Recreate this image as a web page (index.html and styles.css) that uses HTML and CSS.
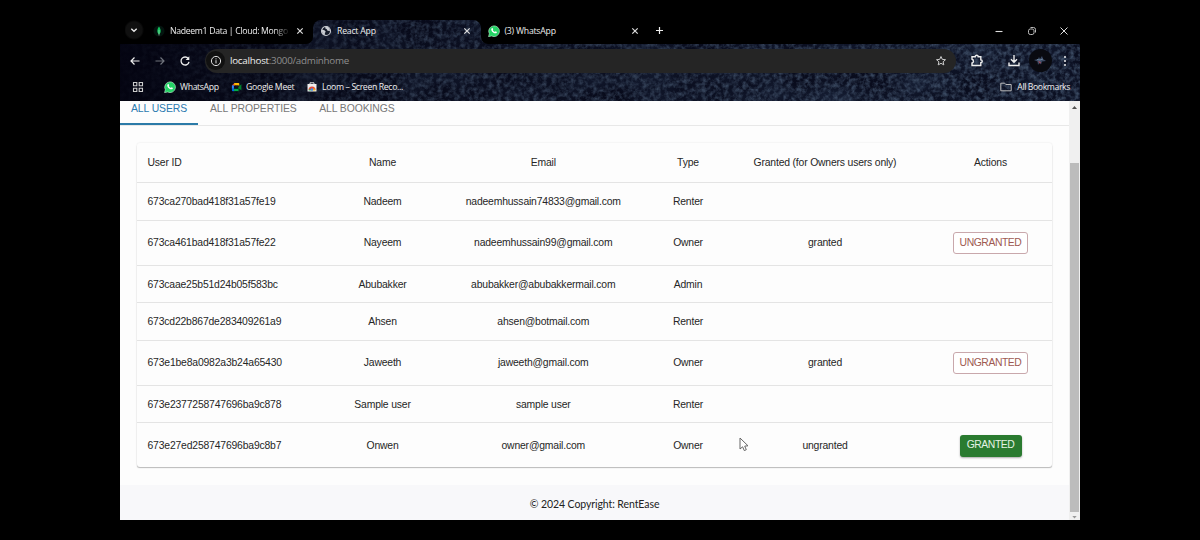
FILE: index.html
```html
<!DOCTYPE html>
<html lang="en">
<head>
<meta charset="utf-8">
<title>React App</title>
<link rel="stylesheet" href="styles.css">
</head>
<body>
<svg class="defs" width="0" height="0">
  <symbol id="close" viewBox="0 0 10 10"><path d="M2.300 2.300l5.400 5.400M7.700 2.300L2.300 7.700" stroke="#ddd" stroke-width="1.200" fill="none"/></symbol>
  <symbol id="whatsapp" viewBox="0 0 12 12"><path d="M.5 11.700l.8-3A5.400 5.400 0 1 1 3.600 11z" fill="#25d366" stroke="#dff8e6" stroke-width=".5"/><path d="M3.600 3.400c.6-.8 1.100-.5 1.600.9l-.4.8c.5 1 1.100 1.500 2.100 1.900l.7-.7c1.600.5 1.600 1 .9 1.700-1.900 1.500-6.600-2.500-4.900-4.600z" fill="#fff"/></symbol>
</svg>
<div class="window">
  <header class="chrome">
    <svg class="texture" width="960" height="81">
      <defs>
        <filter id="grain" x="0" y="0" width="100%" height="100%" color-interpolation-filters="sRGB">
          <feTurbulence type="fractalNoise" baseFrequency=".22" numOctaves="3" seed="8"/>
          <feColorMatrix values="0 0 0 0 .26  0 0 0 0 .33  0 0 0 0 .43  2.200 0 0 0 -.8"/>
        </filter>
        <filter id="clouds" x="0" y="0" width="100%" height="100%" color-interpolation-filters="sRGB">
          <feTurbulence type="fractalNoise" baseFrequency=".018 .03" numOctaves="2" seed="4"/>
          <feColorMatrix values="0 0 0 0 .12  0 0 0 0 .17  0 0 0 0 .27  1.500 0 0 0 -.5"/>
        </filter>
        <linearGradient id="shade"><stop offset="0" stop-color="#030310" stop-opacity=".95"/><stop offset=".3" stop-color="#030310" stop-opacity=".35"/><stop offset="1" stop-color="#030310" stop-opacity=".1"/></linearGradient>
      </defs>
      <rect width="960" height="81" fill="#0a0e20"/>
      <rect width="960" height="81" filter="url(#clouds)"/>
      <rect width="960" height="81" filter="url(#grain)"/>
      <rect width="960" height="81" fill="url(#shade)"/>
    </svg>
    <div class="tabstrip">
      <div class="search-tabs"><svg width="10" height="10" viewBox="0 0 10 10"><path d="M2.300 3.700L5 6.300l2.700-2.600" stroke="#eee" stroke-width="1.300" fill="none"/></svg></div>
      <div class="btab btab-first"><svg class="fav" width="12" height="12" viewBox="0 0 12 12"><circle cx="6" cy="6" r="5.500" fill="#04140f"/><path d="M6 1.500C8.500 5 8 7.800 6 9.500 4 7.800 3.500 5 6 1.500z" fill="#13c05c"/><path d="M6 5v5.500" stroke="#b8e6c8" stroke-width=".6"/></svg><span class="btitle fade">Nadeem1 Data | Cloud: Mongo</span><svg class="x" width="10" height="10"><use href="#close"/></svg></div>
      <div class="btab active"><svg class="fav" width="12" height="12" viewBox="0 0 12 12"><circle cx="6" cy="6" r="4.500" fill="#151b29" stroke="#c9ccd2" stroke-width="1.100"/><path d="M2 4.500l2.500.8 1.300 1.400-1 1.400.3 1.800C2.500 9.300 1.500 7 2 4.500zM5.500 1.600l-.4 1.600 1.700 1 .7 1.600 2.400.3C10.300 3.600 8 1.400 5.500 1.600z" fill="#c9ccd2"/></svg><span class="btitle">React App</span><svg class="x" width="10" height="10"><use href="#close"/></svg></div>
      <div class="btab"><svg class="fav" width="12" height="12"><use href="#whatsapp"/></svg><span class="btitle">(3) WhatsApp</span><svg class="x" width="10" height="10"><use href="#close"/></svg></div>
      <svg class="plus" width="24" height="24" viewBox="0 0 24 24"><path d="M11.500 7v7M8 10.500h7" stroke="#eee" stroke-width="1.200"/></svg>
      <div class="winctl">
        <svg width="10" height="10" viewBox="0 0 10 10"><path d="M1.500 5.500h7" stroke="#ddd" stroke-width="1.100"/></svg>
        <svg width="10" height="10" viewBox="0 0 10 10" fill="none" stroke="#bbb"><rect x="1.500" y="3" width="5.500" height="5.500" rx="1.800"/><path d="M3.500 1.500h3a2 2 0 0 1 2 2v3" /></svg>
        <svg width="10" height="10" viewBox="0 0 10 10"><path d="M1.500 1.500l7 7M8.500 1.500l-7 7" stroke="#ddd"/></svg>
      </div>
    </div>
    <div class="toolbar">
      <div class="nav">
        <svg width="12" height="12" viewBox="0 0 12 12" fill="none" stroke="#eee" stroke-width="1.200"><path d="M10.500 6H2M5.500 2.500L2 6l3.500 3.500"/></svg>
        <svg width="12" height="12" viewBox="0 0 12 12" fill="none" stroke="#70747d" stroke-width="1.200"><path d="M1.500 6H10M6.500 2.500L10 6 6.500 9.500"/></svg>
        <svg width="12" height="12" viewBox="0 0 12 12" fill="none" stroke="#eee" stroke-width="1.300"><path d="M9.300 3.600A4 4 0 1 0 10 6.800"/><path d="M10.300 1.300v3.700H6.600z" fill="#eee" stroke="none"/></svg>
      </div>
      <div class="omnibox">
        <span class="info"><svg width="12" height="12" viewBox="0 0 12 12" fill="none" stroke="#ddd"><circle cx="6" cy="6" r="4.600"/><path d="M6 5.200v3.200M6 3.300v1.100"/></svg></span>
        <span class="url"><b>localhost</b>:3000/adminhome</span>
        <svg class="star" width="12" height="12" viewBox="0 0 12 12"><path d="M6 1.500l1.300 2.900 3.200.3-2.400 2.100.7 3.100L6 8.300 3.200 9.900l.7-3.100-2.400-2.100 3.200-.3z" fill="none" stroke="#ccc"/></svg>
      </div>
      <div class="actions">
        <svg width="14" height="14" viewBox="0 0 14 14"><path d="M2 2.800h3.200a1.500 1.500 0 0 1 3 0h2.600v3.100a1.400 1.400 0 0 1 0 2.900v2.700H2V9a1.900 1.900 0 0 0 0-3.700z" fill="none" stroke="#eee" stroke-width="1.400"/></svg>
        <svg class="dl" width="14" height="14" viewBox="0 0 14 14"><path d="M7 1v7M4 5.200l3 3 3-3M2 8.500v3h10v-3" fill="none" stroke="#eee" stroke-width="1.400"/></svg>
        <span class="avatar"><svg width="16" height="12" viewBox="0 0 16 12"><path d="M2 5l4-1 1-2 1 2 2-3 1 3 3 2-4 .5-1 3-1.500-2L6 10l-.5-3.500z" fill="#3d4b66"/><path d="M6 6l3 1-1 2z" fill="#a04c5c"/><path d="M5 4.500l3 .5 3-1" fill="none" stroke="#7d9aaf" stroke-width=".7"/></svg></span>
        <svg class="dots" width="4" height="12" viewBox="0 0 4 12" fill="#eee"><circle cx="2" cy="2" r="1"/><circle cx="2" cy="6" r="1"/><circle cx="2" cy="10" r="1"/></svg>
      </div>
    </div>
    <div class="bookmarks">
      <svg class="apps" width="12" height="12" viewBox="0 0 12 12" fill="none" stroke="#ccc" stroke-width="1.100"><path d="M1.500 1.500h3.300v3.300H1.500zM7.200 1.500h3.300v3.300H7.200zM1.500 7.200h3.300v3.300H1.500zM7.200 7.200h3.300v3.300H7.200z"/></svg>
      <span class="bm bm1"><svg width="12" height="12"><use href="#whatsapp"/></svg><span>WhatsApp</span></span>
      <span class="bm bm2"><svg width="12" height="12" viewBox="0 0 12 12"><path d="M1 4l3-2.500v3H1z" fill="#ea4335"/><path d="M1 4.200h2.200V8H1z" fill="#2684fc"/><path d="M1 8h2.500v2.500H2a1 1 0 0 1-1-1z" fill="#0066da"/><path d="M3.300 8H8v2.500H3.300z" fill="#00ac47"/><path d="M3.500 1.500h4.700a.8.8 0 0 1 .8.800V5L8 4H3.500z" fill="#ffba00"/><path d="M8 6l3.300-3v6.500L9 8v2.500H8z" fill="#00832d"/></svg><span>Google Meet</span></span>
      <span class="bm bm3"><svg width="12" height="12" viewBox="0 0 12 12"><path d="M1.500 3h9v7.500h-9z" fill="#eee"/><path d="M4 3V1.800h4V3" stroke="#ddd" fill="none"/><path d="M2.500 9a3.500 3.500 0 0 1 7 0z" fill="#e84a3a"/><path d="M2.500 9.500l1.500-2 2 2z" fill="#34a853"/><path d="M9.500 9.500L8 7 6 9.500z" fill="#fbbc04"/><circle cx="6" cy="8.500" r="1.300" fill="#4285f4"/></svg><span>Loom – Screen Reco...</span></span>
      <span class="bm all"><svg width="12" height="12" viewBox="0 0 12 12"><path d="M.8 2.200h3.800l1.200 1.300h5.400v6.300H.8z" fill="none" stroke="#bbb"/></svg><span>All Bookmarks</span></span>
    </div>
  </header>
  <div class="viewport">
    <main class="page">
      <nav class="tabs"><a class="tab selected"><span>ALL USERS</span></a><a class="tab"><span>ALL PROPERTIES</span></a><a class="tab"><span>ALL BOOKINGS</span></a></nav>
      <section class="table">
        <div class="row head"><div>User ID</div><div>Name</div><div>Email</div><div>Type</div><div>Granted (for Owners users only)</div><div>Actions</div></div>
        <div class="row"><div>673ca270bad418f31a57fe19</div><div>Nadeem</div><div>nadeemhussain74833@gmail.com</div><div>Renter</div><div></div><div></div></div>
        <div class="row tall"><div>673ca461bad418f31a57fe22</div><div>Nayeem</div><div>nadeemhussain99@gmail.com</div><div>Owner</div><div>granted</div><div><button class="btn outlined">UNGRANTED</button></div></div>
        <div class="row"><div>673caae25b51d24b05f583bc</div><div>Abubakker</div><div>abubakker@abubakkermail.com</div><div>Admin</div><div></div><div></div></div>
        <div class="row"><div>673cd22b867de283409261a9</div><div>Ahsen</div><div>ahsen@botmail.com</div><div>Renter</div><div></div><div></div></div>
        <div class="row tall"><div>673e1be8a0982a3b24a65430</div><div>Jaweeth</div><div>jaweeth@gmail.com</div><div>Owner</div><div>granted</div><div><button class="btn outlined">UNGRANTED</button></div></div>
        <div class="row"><div>673e2377258747696ba9c878</div><div>Sample user</div><div>sample user</div><div>Renter</div><div></div><div></div></div>
        <div class="row tall"><div>673e27ed258747696ba9c8b7</div><div>Onwen</div><div>owner@gmail.com</div><div>Owner</div><div>ungranted</div><div><button class="btn solid">GRANTED</button></div></div>
      </section>
      <footer class="footer"><span>© 2024 Copyright: RentEase</span></footer>
    </main>
    <div class="scrollbar">
      <svg width="11" height="12" viewBox="0 0 11 12"><path d="M3 8h5L5.500 5z" fill="#505050"/></svg>
      <div class="thumb"></div>
      <svg width="11" height="8" viewBox="0 0 11 8"><path d="M3.300 4h4.400L5.500 6.500z" fill="#999"/></svg>
    </div>
  </div>
  <svg class="cursor" width="10" height="15" viewBox="0 0 10 15"><path d="M1 1v11l2.600-2.200 1.700 3.800 2-.9-1.600-3.600 3.300-.3z" fill="#fff" stroke="#666"/></svg>
</div>
</body>
</html>
```
FILE: styles.css
```css
* { box-sizing: border-box; }
body { margin: 0; height: 540px; background: #000; padding: 20px 120px; overflow: hidden; font-family: "Liberation Sans", Arial, sans-serif; }
svg { display: block; flex: none; }
.defs { position: absolute; }
.window { width: 960px; height: 500px; position: relative; }

/* Browser frame */
.chrome { height: 81px; position: relative; overflow: hidden; color: #eee; font: 500 8.7px/12px "Open Sans", "Noto Sans", sans-serif; }
.texture { position: absolute; inset: 0; }
.tabstrip, .toolbar, .bookmarks { position: relative; display: flex; align-items: center; }
.tabstrip { height: 24px; }
.tabstrip::before { content: ""; width: 5px; align-self: stretch; background: #000; }
.search-tabs { width: 21px; height: 24px; padding: 5px 4px 0; background: radial-gradient(circle at 9px 10px, #101010 8px, #000 10px); }
.btab { width: 167.5px; height: 24px; background: #000; display: flex; align-items: center; padding: 0 8.500px 3px 7px; }
.btab-first { width: 167px; border-radius: 0 0 7px 0; }
.active { background: none; border-radius: 8px 8px 0 0; box-shadow: 0 -8px 0 #000; }
.active + .btab { border-radius: 0 0 0 7px; }
.btitle { margin-left: 5px; flex: 1; white-space: nowrap; letter-spacing: -.22px; }
.fade { flex: none; width: 118px; letter-spacing: -.32px; -webkit-mask-image: linear-gradient(90deg, #000 88%, transparent 102%); mask-image: linear-gradient(90deg, #000 88%, transparent 102%); }
.x { margin-left: auto; }
.plus { width: 24px; height: 24px; background: #000; }
.winctl { flex: 1; height: 24px; background: #000; display: flex; justify-content: flex-end; align-items: center; gap: 22.5px; padding: 0 11px 3px 0; }
.toolbar { height: 33px; }
.nav { display: flex; gap: 13px; width: 85px; padding-left: 9px; }
.omnibox { width: 751px; height: 24px; border-radius: 12px; background: #252525; display: flex; align-items: center; padding: 0 9px 0 1px; }
.info { width: 19px; height: 19px; border-radius: 50%; background: #111; display: grid; place-items: center; }
.url { margin-left: 5px; font-size: 9.8px; font-weight: 400; letter-spacing: -.25px; color: #8e8e8e; }
.url b { color: #eee; font-weight: 400; }
.star { margin-left: auto; }
.actions { display: flex; align-items: center; padding-left: 14px; }
.dl { margin-left: 23px; }
.avatar { width: 23px; height: 23px; margin-left: 7.500px; border-radius: 50%; background: #090a10; display: grid; place-items: center; }
.dots { margin-left: 11.500px; }
.bookmarks { height: 20px; padding: 0 10px 0 12px; }
.bm { display: flex; align-items: center; gap: 4px; white-space: nowrap; }
.bm1 { margin-left: 20px; width: 67px; letter-spacing: -.36px; }
.bm2 { width: 75px; letter-spacing: -.28px; }
.bm2 svg { width: 11px; }
.bm3 { letter-spacing: -.35px; }
.all { margin-left: auto; gap: 5px; letter-spacing: -.4px; }

/* Page */
.viewport { height: 419px; display: flex; background: #fdfdfd; overflow: hidden; }
.page { flex: 1; height: 419px; overflow: hidden; }
.tabs { height: 25px; display: flex; align-items: flex-start; border-bottom: 1px solid #e8e8e8; }
.tab { height: 24px; padding: 2px 10.500px 0 12px; font-size: 10.4px; line-height: 12px; letter-spacing: -.08px; color: #777; white-space: nowrap; }
.selected { width: 78px; padding: 2px 0 0 11px; color: #2a7ab0; border-bottom: 2px solid #2c7ba8; }
.table { width: 915px; margin: 17px 0 0 16.5px; border-radius: 3px; background: #fdfdfd; box-shadow: 0 1.500px 1px -.5px #bbb, 0 0 2px #e4e4e4; font-size: 10.4px; line-height: 14px; color: #262626; letter-spacing: -.18px; }
.row { display: grid; grid-template-columns: 197.5px 97px 224.5px 65px 209px 122px; height: 37.5px; align-items: center; padding-top: 1.500px; border-bottom: 1px solid #e4e4e4; text-align: center; }
.row > div:first-child { text-align: left; padding-left: 11px; }
.head { height: 40px; }
.tall { height: 45px; }
.row:last-child { height: 44px; border-bottom: 0; }
.btn { display: block; margin: 0 auto; font: 10.4px/19px "Liberation Sans", Arial, sans-serif; letter-spacing: -.45px; height: 22px; border-radius: 3px; padding: 0 0 2px; }
.outlined { width: 75px; background: #fff; border: 1px solid #c9a8ac; color: #9e5a52; }
.solid { width: 62px; border: 0; background: #2a7b30; color: #e5f2e5; box-shadow: 0 1px 2px #aaa; }
.footer { height: 36px; margin-top: 17.500px; background: #f8f8fa; display: flex; justify-content: center; align-items: center; padding-top: 3px; font: 10.500px/14px Lato, sans-serif; letter-spacing: -.08px; color: #222; }
.scrollbar { width: 11px; background: #f0f0f0; display: flex; flex-direction: column; }
.thumb { width: 9px; height: 349px; margin: 50px auto 0; background: #bcbcbc; }
.cursor { position: absolute; left: 619px; top: 417px; }
```
